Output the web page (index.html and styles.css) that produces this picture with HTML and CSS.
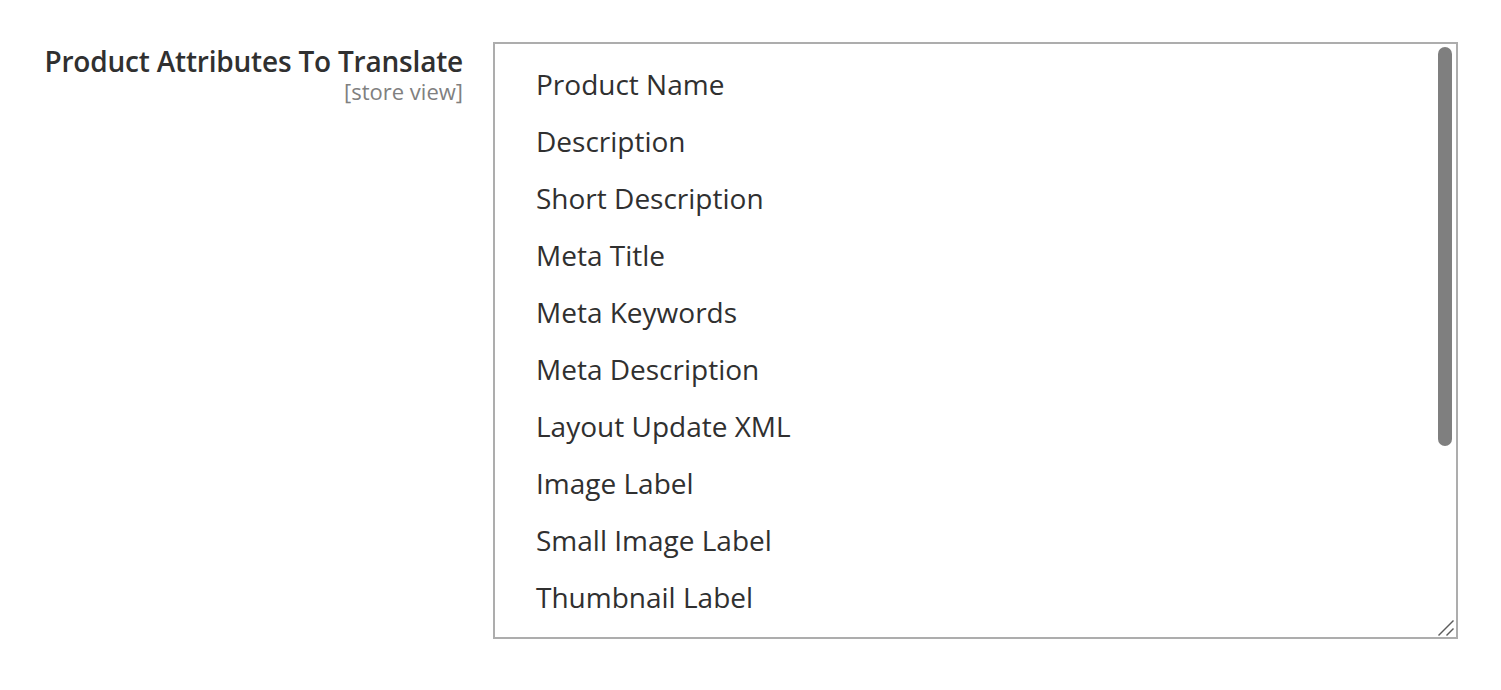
FILE: index.html
```html
<!DOCTYPE html>
<html lang="en">
<head>
  <meta charset="UTF-8">
  <meta name="viewport" content="width=device-width, initial-scale=1.0">
  <title>Product Attributes To Translate</title>
  <link rel="stylesheet" href="styles.css">
</head>
<body>
  <div class="field">
    <label class="field-label" for="attributes">
      <span class="label-text">Product Attributes To Translate</span>
      <span class="scope">[store view]</span>
    </label>
    <div class="field-control">
      <div class="listbox" id="attributes" role="listbox" aria-multiselectable="true">
        <div class="option" role="option">Product Name</div>
        <div class="option" role="option">Description</div>
        <div class="option" role="option">Short Description</div>
        <div class="option" role="option">Meta Title</div>
        <div class="option" role="option">Meta Keywords</div>
        <div class="option" role="option">Meta Description</div>
        <div class="option" role="option">Layout Update XML</div>
        <div class="option" role="option">Image Label</div>
        <div class="option" role="option">Small Image Label</div>
        <div class="option" role="option">Thumbnail Label</div>
        <div class="option" role="option">URL Key</div>
        <div class="option" role="option">Gift Message</div>
        <div class="option" role="option">Custom Layout Update</div>
        <div class="option" role="option">Country of Manufacture</div>
        <div class="option" role="option">Swatch Image Label</div>
      </div>
      <!-- overlay scrollbar, macOS style -->
      <div class="scroll-thumb"></div>
      <svg class="grip" width="18" height="18" viewBox="0 0 18 18" aria-hidden="true">
        <line x1="1.5" y1="16.5" x2="16.5" y2="1.5" />
        <line x1="9.5" y1="16.5" x2="16.5" y2="9.5" />
      </svg>
    </div>
  </div>
</body>
</html>
```

FILE: styles.css
```css
body {
  margin: 0;
  background-color: #fff;
  font-family: "Open Sans", "Liberation Sans", Arial, sans-serif;
  color: #303030;
}
.field {
  display: flex;
  gap: 30px;
  padding-top: 42px;
}
.field-label {
  width: 463px;
  text-align: right;
}
.label-text {
  display: block;
  padding-top: 2px;
  font-size: 28px;
  font-weight: 600;
  line-height: 34px;
  letter-spacing: -0.2px;
}
.scope {
  display: block;
  margin-top: 2px;
  font-size: 22px;
  line-height: 22px;
  color: #808080;
}
.field-control {
  position: relative;
  width: 965px;
}
.listbox {
  box-sizing: border-box;
  height: 597px;
  border: 2px solid #adadad;
  padding: 11px 0 2px;
  overflow: hidden;
  font-size: 28px;
}
.option {
  line-height: 38px;
  padding: 9.5px 41px;
  white-space: nowrap;
}
.scroll-thumb {
  position: absolute;
  top: 5px;
  right: 6px;
  width: 14px;
  height: 399px;
  border-radius: 7px;
  background-color: #7f7f7f;
}
.grip {
  position: absolute;
  right: 3px;
  bottom: 2px;
  stroke: #5c5c5c;
  stroke-width: 1.5;
}
```
